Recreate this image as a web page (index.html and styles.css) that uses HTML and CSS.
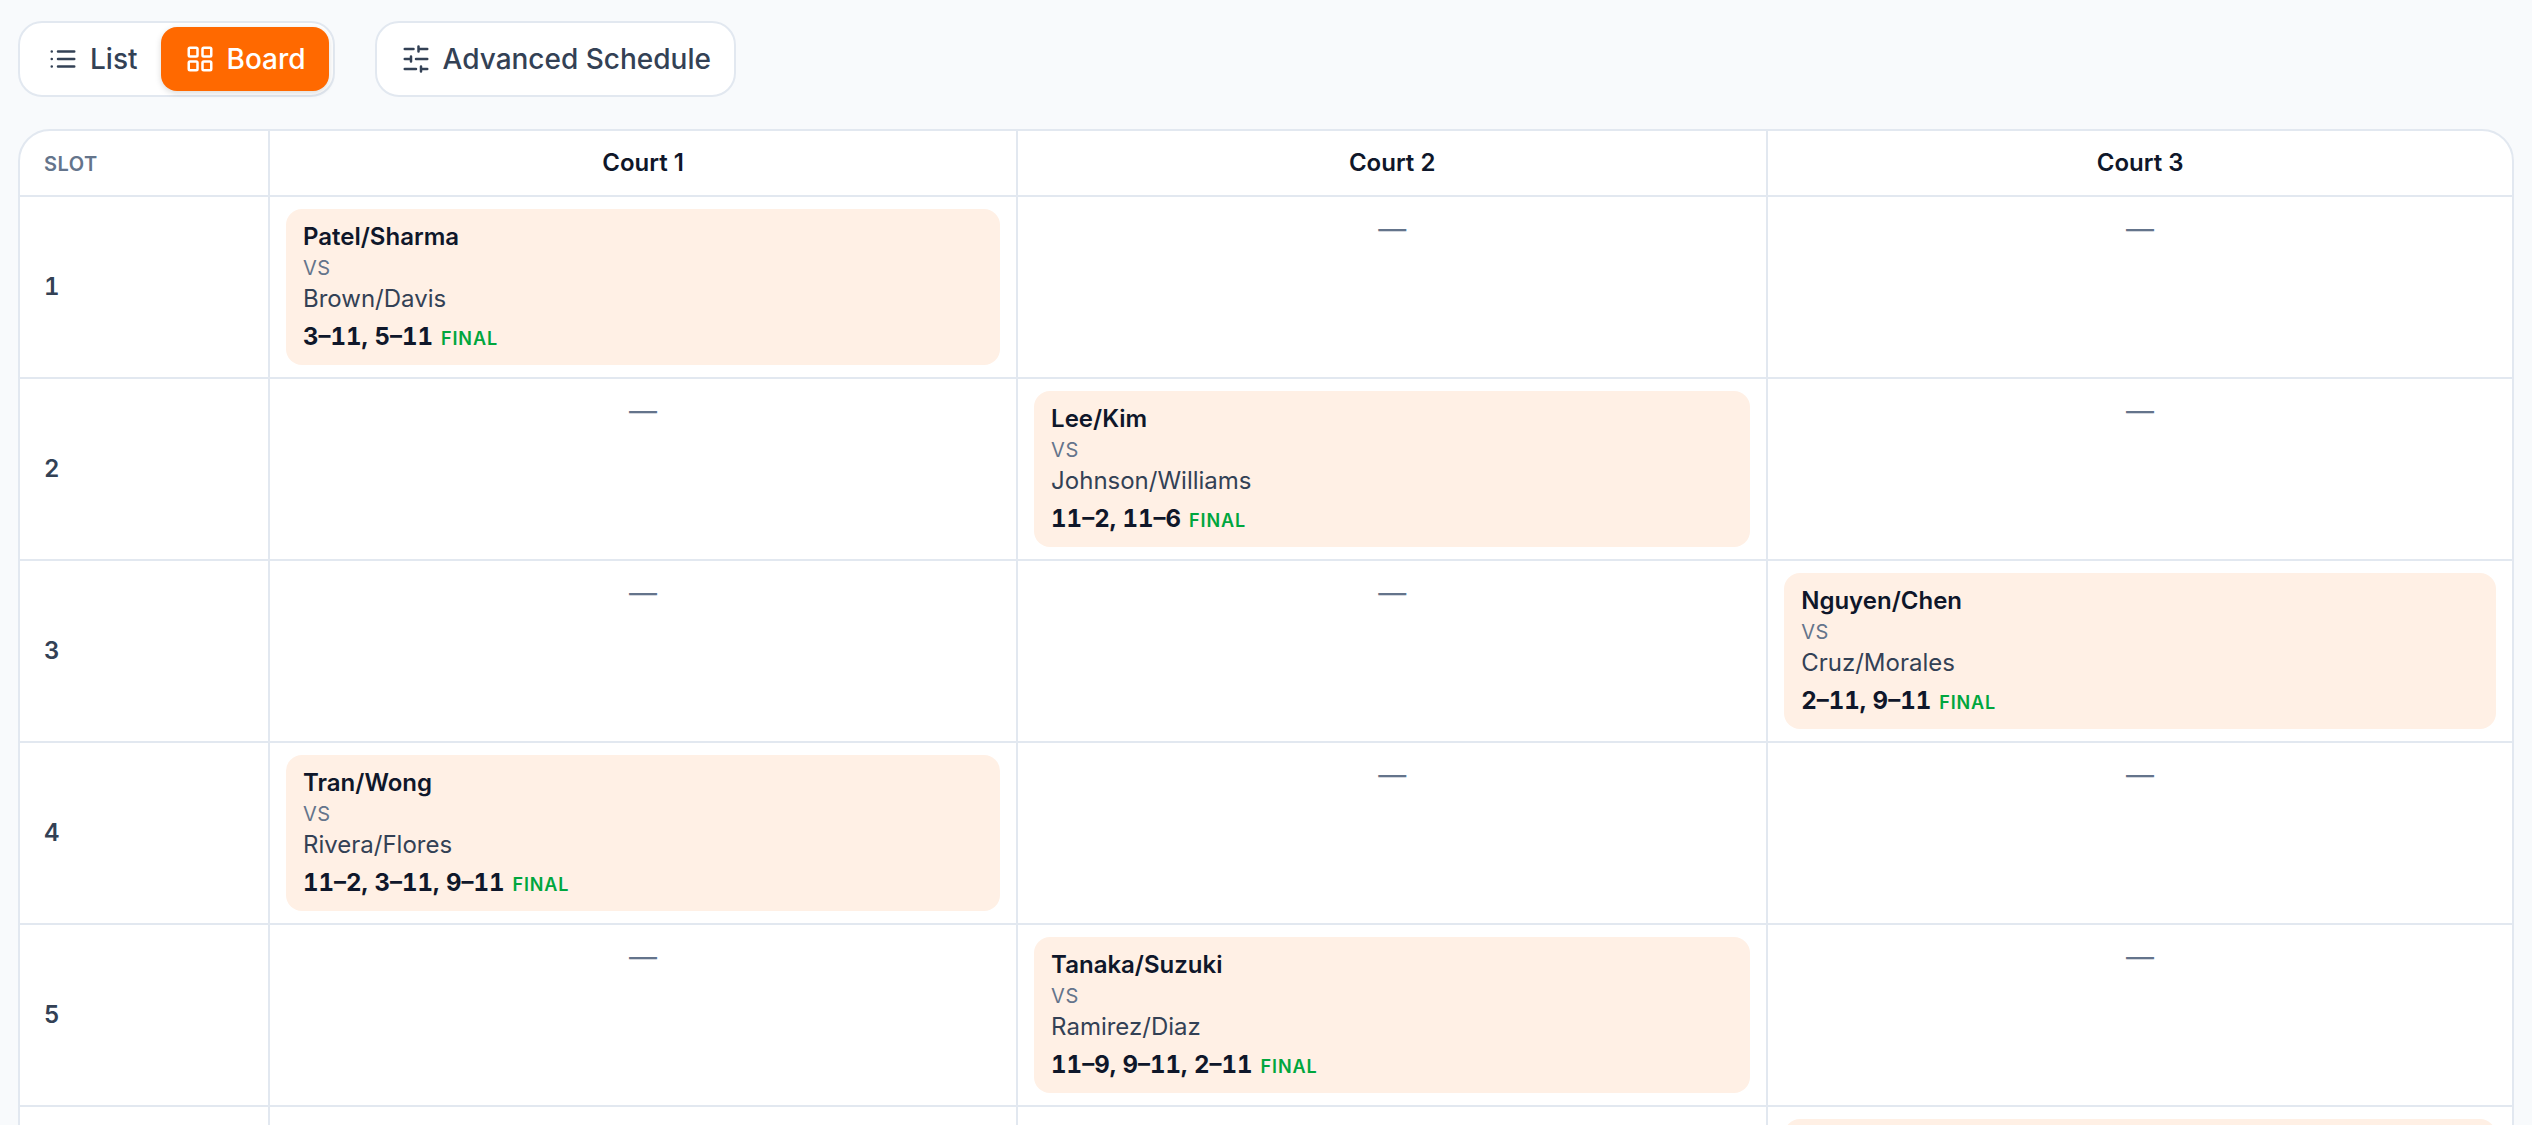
FILE: index.html
```html
<!DOCTYPE html>
<html lang="en">
<head>
    <meta charset="UTF-8">
    <meta name="viewport" content="width=device-width, initial-scale=1.0">
    <title>Match Schedule</title>
    <link rel="stylesheet" href="styles.css">
</head>
<body>
    <div class="toolbar">
        <div class="view-toggle">
            <button type="button" class="view-button">
                <svg class="icon" viewBox="0 0 24 24"><path d="M3 6h.01M3 12h.01M3 18h.01M8 6h13M8 12h13M8 18h13"/></svg>
                List
            </button>
            <button type="button" class="view-button active">
                <svg class="icon" viewBox="0 0 24 24"><rect x="3" y="3" width="7" height="7" rx="1"/><rect x="14" y="3" width="7" height="7" rx="1"/><rect x="14" y="14" width="7" height="7" rx="1"/><rect x="3" y="14" width="7" height="7" rx="1"/></svg>
                Board
            </button>
        </div>
        <button type="button" class="advanced-button">
            <svg class="icon" viewBox="0 0 24 24"><path d="M21 4h-7M10 4H3M21 12h-9M8 12H3M21 20h-5M12 20H3M14 2v4M8 10v4M16 18v4"/></svg>
            Advanced Schedule
        </button>
    </div>

    <div class="board">
        <table class="board-table">
            <colgroup>
                <col class="col-slot">
                <col class="col-first">
                <col class="col-second">
                <col>
            </colgroup>
            <thead>
                <tr>
                    <th scope="col" class="slot-title">Slot</th>
                    <th scope="col">Court 1</th>
                    <th scope="col">Court 2</th>
                    <th scope="col">Court 3</th>
                </tr>
            </thead>
            <tbody>
                <tr>
                    <th scope="row">1</th>
                    <td>
                        <div class="match">
                            <div class="team-one">Patel/Sharma</div>
                            <div class="versus">vs</div>
                            <div class="team-two">Brown/Davis</div>
                            <div class="result"><span class="score">3–11, 5–11</span><span class="status">Final</span></div>
                        </div>
                    </td>
                    <td class="empty">—</td>
                    <td class="empty">—</td>
                </tr>
                <tr>
                    <th scope="row">2</th>
                    <td class="empty">—</td>
                    <td>
                        <div class="match">
                            <div class="team-one">Lee/Kim</div>
                            <div class="versus">vs</div>
                            <div class="team-two">Johnson/Williams</div>
                            <div class="result"><span class="score">11–2, 11–6</span><span class="status">Final</span></div>
                        </div>
                    </td>
                    <td class="empty">—</td>
                </tr>
                <tr>
                    <th scope="row">3</th>
                    <td class="empty">—</td>
                    <td class="empty">—</td>
                    <td>
                        <div class="match">
                            <div class="team-one">Nguyen/Chen</div>
                            <div class="versus">vs</div>
                            <div class="team-two">Cruz/Morales</div>
                            <div class="result"><span class="score">2–11, 9–11</span><span class="status">Final</span></div>
                        </div>
                    </td>
                </tr>
                <tr>
                    <th scope="row">4</th>
                    <td>
                        <div class="match">
                            <div class="team-one">Tran/Wong</div>
                            <div class="versus">vs</div>
                            <div class="team-two">Rivera/Flores</div>
                            <div class="result"><span class="score">11–2, 3–11, 9–11</span><span class="status">Final</span></div>
                        </div>
                    </td>
                    <td class="empty">—</td>
                    <td class="empty">—</td>
                </tr>
                <tr>
                    <th scope="row">5</th>
                    <td class="empty">—</td>
                    <td>
                        <div class="match">
                            <div class="team-one">Tanaka/Suzuki</div>
                            <div class="versus">vs</div>
                            <div class="team-two">Ramirez/Diaz</div>
                            <div class="result"><span class="score">11–9, 9–11, 2–11</span><span class="status">Final</span></div>
                        </div>
                    </td>
                    <td class="empty">—</td>
                </tr>
                <!-- the last slot runs below the fold -->
                <tr>
                    <th scope="row"></th>
                    <td></td>
                    <td></td>
                    <td><div class="match"></div></td>
                </tr>
            </tbody>
        </table>
    </div>
</body>
</html>
```
FILE: styles.css
```css
* {
    box-sizing: border-box;
}

body {
    display: flex;
    flex-direction: column;
    gap: 32px;
    height: 100vh;
    margin: 0;
    padding: 21px 18px 0;
    overflow: hidden;
    background: #f8fafc;
    color: #0f172a;
    font-family: Inter, sans-serif;
    font-size: 24px;
    line-height: 30px;
}

/* Toolbar */
.toolbar {
    display: flex;
    flex-shrink: 0;
    gap: 40px;
}

.view-toggle {
    display: flex;
    padding: 4px;
    background: #fff;
    border: 2px solid #e2e8f0;
    border-radius: 24px;
}

.view-button,
.advanced-button {
    display: flex;
    align-items: center;
    gap: 12px;
    padding: 12px 23px 12px 24px;
    background: #fff;
    border: none;
    color: #334155;
    font-family: inherit;
    font-size: 28px;
    font-weight: 500;
    line-height: 40px;
    cursor: pointer;
}

.view-button {
    border-radius: 16px;
}

.view-button.active {
    background: #ff6900;
    color: #fff;
    box-shadow: 0 2px 6px rgba(0, 0, 0, 0.15);
}

.advanced-button {
    border: 2px solid #e2e8f0;
    border-radius: 24px;
}

.icon {
    width: 30px;
    height: 30px;
    fill: none;
    stroke: currentColor;
    stroke-width: 2;
    stroke-linecap: round;
    stroke-linejoin: round;
}

/* Board */
.board {
    flex-shrink: 0;
    overflow: hidden;
    background: #fff;
    border: 2px solid #e2e8f0;
    border-radius: 32px;
}

.board-table {
    width: 100%;
    table-layout: fixed;
    border-collapse: separate;
    border-spacing: 0;
}

.col-slot {
    width: 250px;
}

.col-first {
    width: 30.02%;
}

.col-second {
    width: 30.1%;
}

th,
td {
    border-right: 2px solid #e2e8f0;
    border-bottom: 2px solid #e2e8f0;
}

th:last-child,
td:last-child {
    border-right: none;
}

th {
    padding: 16px 24px;
    font-weight: 600;
    line-height: 32px;
}

thead th {
    vertical-align: baseline;
}

th.slot-title {
    color: #64748b;
    font-size: 20px;
    letter-spacing: 0.025em;
    line-height: 30px;
    text-align: left;
    text-transform: uppercase;
}

tbody th {
    color: #334155;
    font-variant-numeric: tabular-nums;
    text-align: left;
}

td {
    padding: 12px 16px;
    vertical-align: top;
}

td.empty {
    padding-top: 16px;
    color: #64748b;
    font-size: 28px;
    line-height: 32px;
    text-align: center;
}

.match {
    min-height: 156px;
    padding: 13px 17px 11px;
    background: #fff0e5;
    border-radius: 16px;
}

.team-one {
    font-weight: 600;
}

.versus {
    color: #64748b;
    font-size: 20px;
    letter-spacing: 0.025em;
    line-height: 32px;
    text-transform: uppercase;
}

.team-two {
    color: #334155;
}

.result {
    display: flex;
    align-items: baseline;
    gap: 8px;
    margin-top: 6px;
    line-height: 34px;
}

.score {
    font-weight: 700;
    font-variant-numeric: tabular-nums;
}

.status {
    color: #00a63e;
    font-size: 18px;
    font-weight: 600;
    letter-spacing: 0.05em;
    line-height: 24px;
    text-transform: uppercase;
}
```
